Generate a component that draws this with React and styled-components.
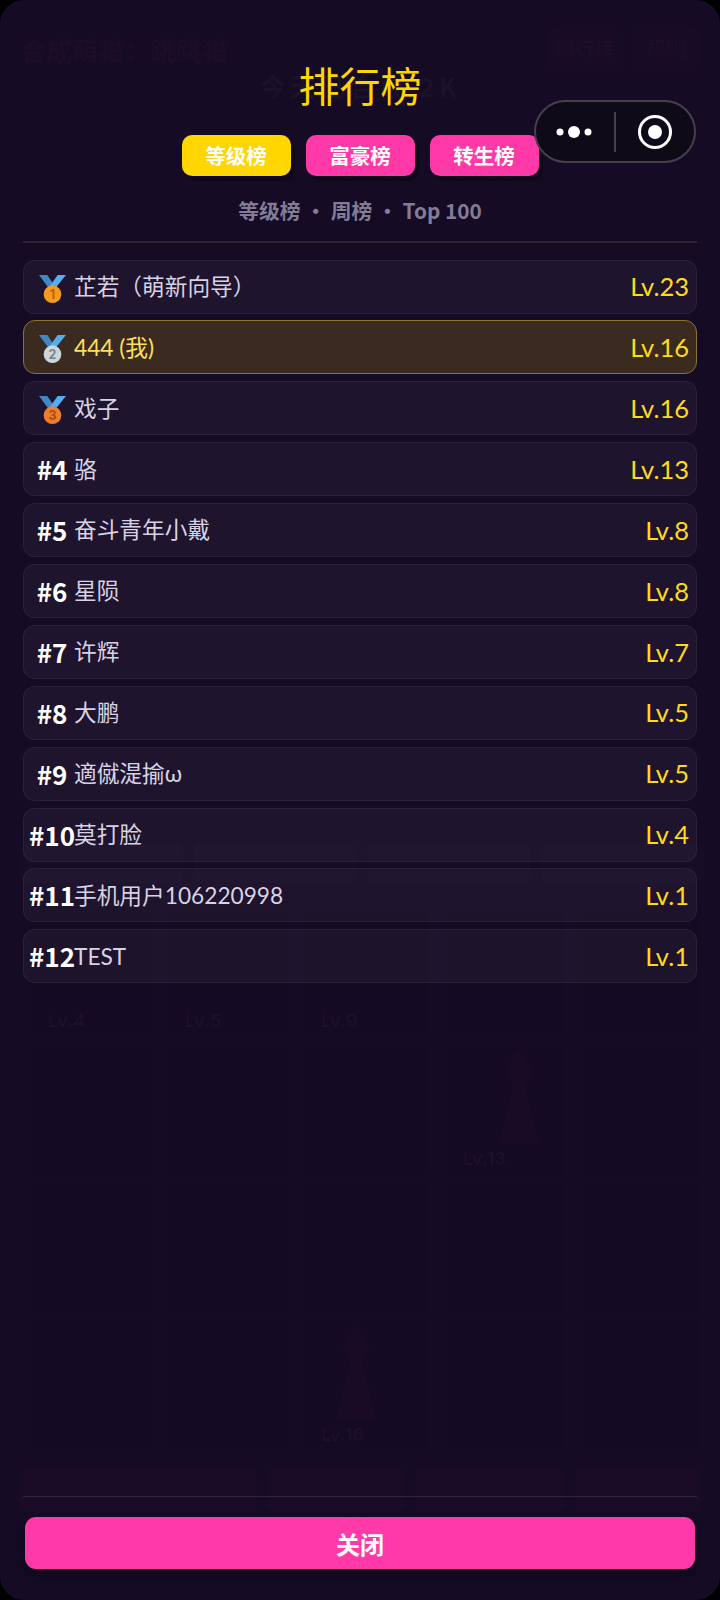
import React from "react";
import styled, { createGlobalStyle } from "styled-components";

const Global = createGlobalStyle`
  html, body { margin: 0; padding: 0; background: #000; }
  * { box-sizing: border-box; }
  body { font-family: Lato, "Noto Sans CJK SC", sans-serif; }
`;

const CJK = `"Noto Sans CJK SC", "Noto Sans", sans-serif`;
const LATIN_CJK = `Lato, "Noto Sans CJK SC", sans-serif`;

const Page = styled.div`
  position: relative;
  width: 720px;
  height: 1600px;
  overflow: hidden;
  border-radius: 24px;
  background: #150b25;
`;

/* ------- dimmed game page behind the modal ------- */
const Behind = styled.div`
  display: flex;
  flex-direction: column;
  height: 100%;
  padding: 27px 20px 0;
  font-family: ${CJK};
  color: rgba(255, 255, 255, 0.018);
`;
const BehindTop = styled.div`
  display: flex;
  align-items: center;
  gap: 10px;
  height: 44px;
`;
const BehindTitle = styled.div`
  flex: 1;
  font-size: 26px;
  font-weight: 700;
  color: rgba(255, 60, 170, 0.04);
`;
const BehindChip = styled.div`
  width: ${(p) => p.$w}px;
  height: 44px;
  border-radius: 8px;
  background: rgba(255, 60, 170, 0.012);
  text-align: center;
  line-height: 44px;
  font-size: 20px;
  font-weight: 700;
  color: rgba(255, 60, 170, 0.028);
`;
const BehindStat = styled.div`
  height: 30px;
  line-height: 30px;
  text-align: center;
  font-size: 26px;
  font-weight: 700;
  letter-spacing: 4px;
  color: rgba(255, 255, 255, 0.03);
`;
const BehindNotice = styled.div`
  margin-top: 684px;
  height: 30px;
  line-height: 30px;
  font-size: 16px;
  margin-left: -20px;
`;
const BehindBoxes = styled.div`
  display: grid;
  grid-template-columns: repeat(4, 163px);
  gap: 10.5px;
  height: 40px;
  margin-top: 28px;
`;
const BehindBox = styled.div`
  border-radius: 8px;
  background: rgba(255, 255, 255, 0.012);
`;
const BehindGrid = styled.div`
  display: grid;
  grid-template-columns: repeat(5, 123px);
  grid-auto-rows: 134px;
  gap: 4px 14px;
  margin: 22px 0 0 10px;
`;
const BehindCell = styled.div`
  display: flex;
  flex-direction: column;
  align-items: center;
  justify-content: center;
  position: relative;
  border-radius: 6px;
  background: rgba(0, 0, 0, 0.03);
  font-size: 18px;
  font-weight: 700;
`;
const BehindLevel = styled.span`
  position: absolute;
  left: ${(p) => p.$left}px;
  bottom: 8px;
  font-family: Inter, sans-serif;
  font-size: 18px;
  font-weight: 700;
  color: rgba(255, 255, 255, 0.03);
`;
const BehindFigure = styled.svg`
  position: absolute;
  left: ${(p) => p.$left}px;
  top: 4px;
`;
const BehindActions = styled.div`
  display: grid;
  grid-template-columns: 237px 136px 149px 125px;
  gap: 11px;
  height: 46px;
  margin-top: 14px;
`;
const BehindAction = styled.div`
  border-radius: 8px;
  background: rgba(255, 60, 120, 0.022);
  text-align: center;
  line-height: 46px;
  font-size: 20px;
  font-weight: 700;
`;

/* ------- modal ------- */
const Modal = styled.div`
  position: absolute;
  inset: 0;
  display: flex;
  flex-direction: column;
  padding: 60px 23px 31px;
  font-family: ${LATIN_CJK};
`;
const Title = styled.h1`
  margin: 0;
  height: 50px;
  line-height: 48px;
  text-align: center;
  font-family: ${CJK};
  font-size: 41px;
  font-weight: 400;
  color: #ffd600;
`;
const Tabs = styled.div`
  display: flex;
  justify-content: center;
  gap: 15px;
  margin-top: 25px;
`;
const Tab = styled.div`
  width: 109px;
  height: 41px;
  line-height: 41px;
  border-radius: 10px;
  text-align: center;
  font-family: ${CJK};
  font-size: 20.5px;
  font-weight: 700;
  color: #fff;
  background: ${(p) => (p.$active ? "#ffd600" : "#ff3aa8")};
  box-shadow: 4px 5px 0 rgba(0, 0, 0, 0.25);
`;
const Subtitle = styled.div`
  margin-top: 18px;
  height: 32px;
  line-height: 32px;
  text-align: center;
  font-family: ${CJK};
  font-size: 20.8px;
  font-weight: 700;
  color: #827c96;
  white-space: pre;
`;
const Rule = styled.div`
  height: 1.5px;
  flex: none;
  margin-top: ${(p) => p.$top}px;
  background: ${(p) => p.$color};
`;
const List = styled.div`
  flex: 1;
  display: flex;
  flex-direction: column;
  gap: 6.9px;
  margin-top: 17px;
`;
const Row = styled.div`
  display: flex;
  align-items: center;
  height: 54px;
  flex: none;
  padding: 0 7px 0 8px;
  border-radius: 12px;
  border: 1.5px solid ${(p) => (p.$me ? "#8c7330" : "rgba(255,255,255,0.06)")};
  background: ${(p) => (p.$me ? "#3b2a1f" : "rgba(255,255,255,0.04)")};
`;
const Rank = styled.div`
  flex: none;
  display: flex;
  justify-content: center;
  width: 40px;
  margin-right: 2px;
  font-family: ${CJK};
  font-size: 26px;
  font-weight: 700;
  line-height: 1;
  white-space: nowrap;
  color: #fff;
`;
const MedalIcon = styled.svg`
  display: block;
  margin-top: 4px;
`;
const Name = styled.div`
  flex: 1;
  font-size: 22.7px;
  font-weight: 400;
  line-height: 1.2;
  white-space: nowrap;
  color: ${(p) => (p.$me ? "#ffe05a" : "#d8d2e4")};
`;
const Level = styled.div`
  flex: none;
  font-size: 25.5px;
  font-weight: 400;
  line-height: 1.2;
  color: #ffd91a;
`;
const CloseButton = styled.button`
  flex: none;
  height: 52px;
  margin: 20px 2px 0;
  border: 0;
  border-radius: 11px;
  background: #ff3aa8;
  color: #fff;
  font-family: ${CJK};
  font-size: 24px;
  font-weight: 700;
  box-shadow: 0 4px 10px rgba(0, 0, 0, 0.35);
`;

/* ------- WeChat capsule lying over the page ------- */
const Capsule = styled.div`
  position: absolute;
  left: 534px;
  top: 100px;
  width: 162px;
  height: 63px;
  display: flex;
  align-items: center;
  border-radius: 32px;
  border: 2.5px solid #45404f;
  background: #0f0a18;
`;
const CapsuleHalf = styled.div`
  flex: 1;
  display: flex;
  align-items: center;
  justify-content: center;
`;
const CapsuleLine = styled.div`
  width: 1.5px;
  height: 40px;
  background: #45404f;
`;

const medals = {
  1: { disc: "#f59a1d", ink: "#b3640a" },
  2: { disc: "#cdd6da", ink: "#71848f" },
  3: { disc: "#ef7d2c", ink: "#a84a10" },
};

function Medal({ place }) {
  const m = medals[place];
  return (
    <MedalIcon width="27" height="28" viewBox="0 0 26 27" aria-hidden="true">
      <path d="M0 0h8l6 9-3 6z" fill="#3f88c5" />
      <path d="M26 0h-8L10 11l4 4z" fill="#55acee" />
      <circle cx="13" cy="18.5" r="8.5" fill={m.disc} />
      <text x="13" y="23" textAnchor="middle" fontSize="12" fontWeight="700" fontFamily="Inter, sans-serif" fill={m.ink}>
        {place}
      </text>
    </MedalIcon>
  );
}

const players = [
  ["芷若（萌新向导）", 23],
  ["444 (我)", 16, true],
  ["戏子", 16],
  ["骆", 13],
  ["奋斗青年小戴", 8],
  ["星陨", 8],
  ["许辉", 7],
  ["大鹏", 5],
  ["適僦湜揄ω", 5],
  ["莫打脸", 4],
  ["手机用户106220998", 1],
  ["TEST", 1],
];

const ghostCells = [
  { level: "Lv.4", left: 18 }, { level: "Lv.5", left: 18 }, { level: "Lv.9", left: 17 }, {}, {},
  { text: "11" }, { text: "12" }, { text: "13" }, { level: "Lv.13", left: 22, figure: 48 }, { text: "15" },
  { text: "16" }, { text: "17" }, { text: "18" }, { text: "19" }, { text: "20" },
  { text: "21" }, { text: "22" }, { level: "Lv.16", left: 17, figure: 22 }, { text: "24" }, { text: "25" },
];

function GhostFigure({ left }) {
  return (
    <BehindFigure $left={left} width="60" height="100" viewBox="0 0 60 100" aria-hidden="true">
      <path d="M30 2l14 22-8 14 14 58H10l14-58-8-14z" fill="rgba(255,40,110,0.022)" />
    </BehindFigure>
  );
}

export default function App() {
  return (
    <Page>
      <Global />
      <Behind>
        <BehindTop>
          <BehindTitle>合成萌猫：跳跳猫</BehindTitle>
          <BehindChip $w={75}>排行榜</BehindChip>
          <BehindChip $w={68}>规则</BehindChip>
        </BehindTop>
        <BehindStat>今天已合成 2K</BehindStat>
        <BehindNotice>本赛季排行榜每周更新奖励</BehindNotice>
        <BehindBoxes>
          <BehindBox />
          <BehindBox />
          <BehindBox />
          <BehindBox />
        </BehindBoxes>
        <BehindGrid>
          {ghostCells.map((c, i) => (
            <BehindCell key={i}>
              {c.figure !== undefined && <GhostFigure left={c.figure} />}
              {c.text}
              {c.level && <BehindLevel $left={c.left}>{c.level}</BehindLevel>}
            </BehindCell>
          ))}
        </BehindGrid>
        <BehindActions>
          <BehindAction>合成萌猫</BehindAction>
          <BehindAction>商店</BehindAction>
          <BehindAction>任务</BehindAction>
          <BehindAction>背包</BehindAction>
        </BehindActions>
      </Behind>

      <Modal>
        <Title>排行榜</Title>
        <Tabs>
          <Tab $active>等级榜</Tab>
          <Tab>富豪榜</Tab>
          <Tab>转生榜</Tab>
        </Tabs>
        <Subtitle>等级榜 · 周榜 · Top 100</Subtitle>
        <Rule $top={15} $color="#2e2233" />
        <List>
          {players.map(([name, level, me], i) => (
            <Row key={i} $me={me}>
              <Rank>{i < 3 ? <Medal place={i + 1} /> : `#${i + 1}`}</Rank>
              <Name $me={me}>{name}</Name>
              <Level>Lv.{level}</Level>
            </Row>
          ))}
        </List>
        <Rule $top={0} $color="#2e2538" />
        <CloseButton>关闭</CloseButton>
      </Modal>

      <Capsule>
        <CapsuleHalf>
          <svg width="44" height="16" viewBox="0 0 44 16" aria-hidden="true">
            <circle cx="7" cy="8" r="3.5" fill="#fff" />
            <circle cx="21" cy="8" r="6" fill="#fff" />
            <circle cx="35" cy="8" r="3.5" fill="#fff" />
          </svg>
        </CapsuleHalf>
        <CapsuleLine />
        <CapsuleHalf>
          <svg width="36" height="36" viewBox="0 0 36 36" aria-hidden="true">
            <circle cx="18" cy="18" r="15.5" fill="none" stroke="#fff" strokeWidth="3" />
            <circle cx="18" cy="18" r="7" fill="#fff" />
          </svg>
        </CapsuleHalf>
      </Capsule>
    </Page>
  );
}
